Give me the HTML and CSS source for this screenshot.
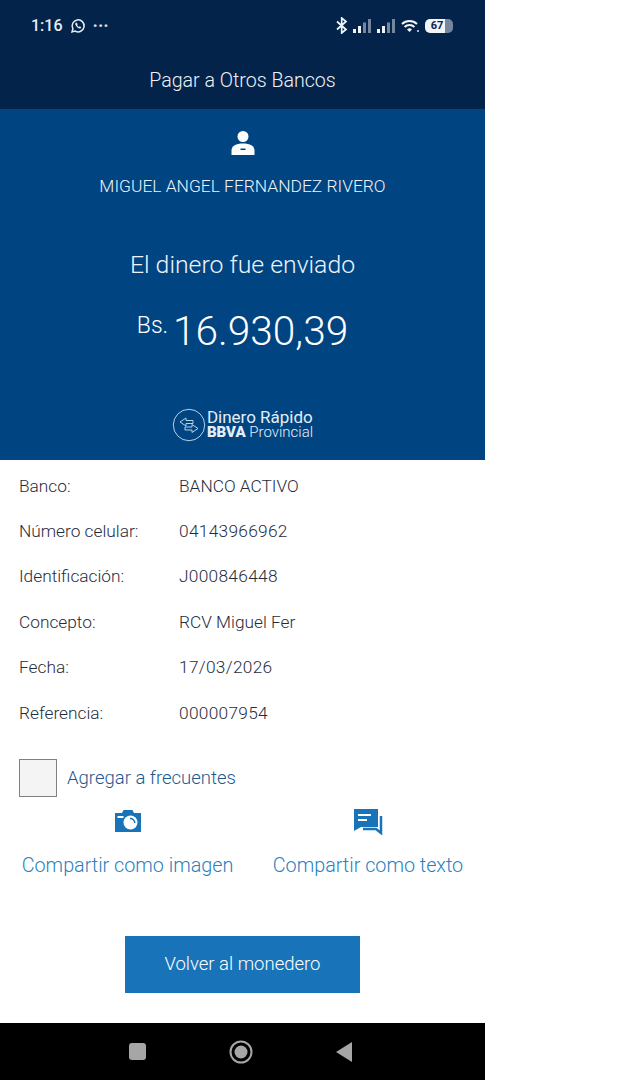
FILE: index.html
```html
<!DOCTYPE html>
<html lang="es">
<head>
  <meta charset="UTF-8">
  <meta name="viewport" content="width=device-width, initial-scale=1.0">
  <title>Pagar a Otros Bancos</title>
  <link rel="stylesheet" href="styles.css">
</head>
<body>
  <div class="phone">
    <div class="top-bar">
      <div class="status-bar">
        <div class="status-left">
          <span class="clock">1:16</span>
          <svg class="wa-icon" width="16" height="16" viewBox="0 0 16 16">
            <path d="M2 14l.9-3.2A6 6 0 1 1 5.2 13.1z" fill="none" stroke="#e8edf2" stroke-width="1.5"/>
            <path d="M5.8 4.8c-.9.7-.7 2 .3 3.3s2.300 2.400 3.500 2.400c1 0 1.500-.6 1.600-1.300l-1.500-.9-.7.7c-.8-.3-1.500-1-1.900-1.900l.6-.7-.8-1.600z" fill="#e8edf2"/>
          </svg>
          <span class="dots">···</span>
        </div>
        <div class="status-right">
          <svg width="12" height="17" viewBox="0 0 12 17">
            <path d="M1 4.500l9 8-4.300 3.500V1l4.300 3.500-9 8" fill="none" stroke="#f2f4f7" stroke-width="1.700"/>
          </svg>
          <svg class="signal" width="19" height="14" viewBox="0 0 19 14">
            <rect x="0" y="10" width="3" height="4" fill="#f2f4f7"/>
            <rect x="5" y="7" width="3" height="7" fill="#f2f4f7"/>
            <rect x="10" y="3.500" width="3" height="10.500" fill="#74879f"/>
            <rect x="15" y="0" width="3" height="14" fill="#74879f"/>
          </svg>
          <svg class="signal" width="19" height="14" viewBox="0 0 19 14">
            <rect x="0" y="10" width="3" height="4" fill="#f2f4f7"/>
            <rect x="5" y="7" width="3" height="7" fill="#f2f4f7"/>
            <rect x="10" y="3.500" width="3" height="10.500" fill="#74879f"/>
            <rect x="15" y="0" width="3" height="14" fill="#74879f"/>
          </svg>
          <svg width="19" height="14" viewBox="0 0 19 14">
            <path d="M1 5a11 11 0 0 1 15 0M3.600 8a7.200 7.200 0 0 1 9.800 0" fill="none" stroke="#f2f4f7" stroke-width="2"/>
            <path d="M6 10.500a3.600 3.600 0 0 1 5 0L8.500 13z" fill="#f2f4f7"/>
            <rect x="16" y="11" width="2" height="2" fill="#a8b5c4"/>
          </svg>
          <div class="battery"><span class="battery-num">67</span></div>
        </div>
      </div>
      <div class="page-title">Pagar a Otros Bancos</div>
    </div>

    <section class="hero">
      <svg class="person" width="24" height="26" viewBox="0 0 24 26">
        <circle cx="12" cy="6.500" r="5.500" fill="#fff"/>
        <path d="M0.500 25v-4.500C0.500 16 5 13.500 12 13.500S23.500 16 23.500 20.500V25z" fill="#fff"/>
        <rect x="9.500" y="18.500" width="5" height="1.500" fill="#004481"/>
      </svg>
      <div class="payee">MIGUEL ANGEL FERNANDEZ RIVERO</div>
      <div class="sent">El dinero fue enviado</div>
      <div class="amount"><span class="currency">Bs.</span><span class="value">16.930,39</span></div>
      <div class="brand">
        <svg width="34" height="34" viewBox="0 0 34 34">
          <circle cx="17" cy="17" r="15.700" fill="none" stroke="#b9cfe4" stroke-width="1"/>
          <path d="M14 10l-6 4 6 4v-2.500h7v-3h-7zM20 16.500l6 4-6 4V22h-7v-3h7z" fill="none" stroke="#b9cfe4" stroke-width="1"/>
        </svg>
        <div class="brand-text">
          <div class="brand-name">Dinero Rápido</div>
          <div class="brand-bank"><b>BBVA</b> Provincial</div>
        </div>
      </div>
    </section>

    <section class="details">
      <div class="row"><span class="label">Banco:</span><span class="val">BANCO ACTIVO</span></div>
      <div class="row"><span class="label">Número celular:</span><span class="val num">04143966962</span></div>
      <div class="row"><span class="label">Identificación:</span><span class="val num">J000846448</span></div>
      <div class="row"><span class="label">Concepto:</span><span class="val">RCV Miguel Fer</span></div>
      <div class="row"><span class="label">Fecha:</span><span class="val num">17/03/2026</span></div>
      <div class="row"><span class="label">Referencia:</span><span class="val num">000007954</span></div>
    </section>

    <label class="favorite">
      <span class="checkbox"></span>
      <span class="favorite-text">Agregar a frecuentes</span>
    </label>

    <div class="share">
      <div class="share-item">
        <svg width="28" height="24" viewBox="0 0 28 24">
          <path d="M1 4h7l1.500-3h9L20 4h7v19H1z" fill="#1973b8"/>
          <circle cx="16.500" cy="13.500" r="7" fill="#fff"/>
          <path d="M16 9.500a4.500 4.500 0 0 1 4.800 4.500" fill="none" stroke="#1973b8" stroke-width="1.500"/>
          <rect x="3.500" y="7" width="6" height="2" fill="#fff"/>
        </svg>
        <span class="share-text">Compartir como imagen</span>
      </div>
      <div class="share-item">
        <svg width="30" height="26" viewBox="0 0 30 26">
          <path d="M1 1h24v18H8l-7 4z" fill="#1973b8"/>
          <rect x="5" y="6" width="13" height="2" fill="#fff"/>
          <rect x="5" y="11" width="9" height="2" fill="#fff"/>
          <path d="M28 8v17l-5-4H10" fill="none" stroke="#1973b8" stroke-width="2.500"/>
        </svg>
        <span class="share-text">Compartir como texto</span>
      </div>
    </div>

    <div class="actions">
      <button class="back-btn">Volver al monedero</button>
    </div>

    <nav class="nav-bar">
      <span class="nav-square"></span>
      <svg width="24" height="24" viewBox="0 0 24 24">
        <circle cx="12" cy="12" r="10.500" fill="none" stroke="#a6a6a6" stroke-width="2"/>
        <circle cx="12" cy="12" r="6.500" fill="#a6a6a6"/>
      </svg>
      <svg width="18" height="20" viewBox="0 0 18 20">
        <path d="M17 0v20L1 10z" fill="#a6a6a6"/>
      </svg>
    </nav>
  </div>
</body>
</html>
```

FILE: styles.css
```css
/* General Styles */
body {
  margin: 0;
  padding: 0;
  background: #fff;
  font-family: "Roboto", "Liberation Sans", sans-serif;
  font-weight: 300;
}

.phone {
  width: 485px;
  height: 1080px;
  display: flex;
  flex-direction: column;
}

/* Top bar */
.top-bar {
  height: 109px;
  background: #03234b;
  color: #fff;
}

.status-bar {
  height: 51px;
  padding: 0 32px 0 31px;
  display: flex;
  justify-content: space-between;
  align-items: center;
}

.status-left,
.status-right {
  display: flex;
  align-items: center;
}

.status-left {
  gap: 7px;
}

.status-right {
  gap: 5px;
}

.clock {
  font-size: 16px;
  font-weight: 500;
  color: #e8edf2;
}

.dots {
  font-size: 18px;
  font-weight: 700;
  line-height: 16px;
  color: #d5dce5;
}

.battery {
  width: 28px;
  height: 14px;
  border-radius: 5px;
  background: linear-gradient(90deg, #f2f4f7 70%, #74879f 70%);
  display: flex;
  align-items: center;
  justify-content: center;
}

.battery-num {
  font-size: 11px;
  font-weight: 700;
  color: #03234b;
  margin-right: 4px;
}

.page-title {
  margin-top: 6px;
  text-align: center;
  font-size: 19.600px;
  line-height: 48px;
  color: #eef2f6;
}

/* Blue panel */
.hero {
  height: 351px;
  background: #004481;
  color: #fff;
  display: flex;
  flex-direction: column;
  align-items: center;
}

.person {
  margin-top: 21px;
}

.payee {
  margin-top: 20px;
  font-size: 17.400px;
  line-height: 20px;
  color: #eef4fa;
}

.sent {
  margin-top: 54px;
  font-size: 24.800px;
  line-height: 30px;
  color: #eef4fa;
}

.amount {
  margin-top: 27px;
  display: flex;
  align-items: flex-start;
  gap: 5px;
}

.currency {
  font-size: 23px;
  line-height: 38px;
}

.value {
  font-size: 40.600px;
  line-height: 48px;
}

.brand {
  margin-top: 53px;
  display: flex;
  align-items: center;
  gap: 1px;
}

.brand-text {
  color: #e4eef7;
  line-height: 15px;
}

.brand-name {
  font-size: 17px;
  font-weight: 400;
}

.brand-bank {
  font-size: 15px;
}

.brand-bank b {
  font-weight: 900;
}

/* Details */
.details {
  padding: 3px 19px 0;
}

.row {
  height: 45.400px;
  display: flex;
  align-items: center;
  font-size: 17.300px;
  color: #1f2d3d;
}

.label {
  width: 160px;
}

.num {
  letter-spacing: 0.3px;
}

.favorite {
  margin: 0 19px;
  padding-top: 24px;
  display: flex;
  align-items: center;
  gap: 10px;
}

.checkbox {
  width: 36px;
  height: 36px;
  border: 1px solid #808080;
  background: #f4f4f4;
}

.favorite-text {
  font-size: 18.500px;
  color: #1d5a8f;
}

.share {
  margin-top: 10px;
  display: flex;
}

.share-item {
  display: flex;
  flex-direction: column;
  align-items: center;
  color: #2a7fbd;
}

.share-item svg {
  height: 28px;
  margin-bottom: 19px;
}

.share-item:first-child {
  margin-left: 22px;
  width: 211px;
}

.share-item:last-child {
  margin-left: 39px;
  width: 192px;
}

.share-text {
  font-size: 19.750px;
  line-height: 24px;
  white-space: nowrap;
}

.actions {
  flex: 1;
  display: flex;
  justify-content: center;
  align-items: center;
  padding-top: 28px;
}

.back-btn {
  width: 235px;
  height: 57px;
  border: none;
  background: #1973b8;
  color: #fff;
  font-family: inherit;
  font-weight: 300;
  font-size: 18.500px;
  padding-bottom: 3px;
}

/* Android nav */
.nav-bar {
  height: 57px;
  background: #000;
  display: flex;
  align-items: center;
  justify-content: space-between;
  padding: 0 132px 0 129px;
}

.nav-square {
  width: 17px;
  height: 17px;
  border-radius: 3px;
  background: #a6a6a6;
}
```
